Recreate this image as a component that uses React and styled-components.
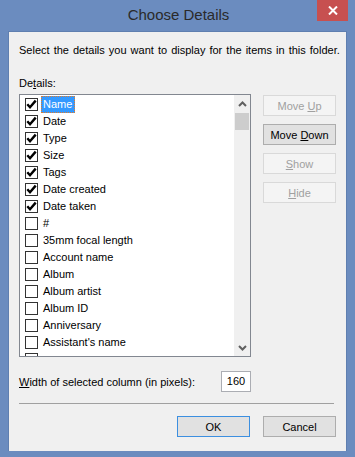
import styled, { createGlobalStyle } from "styled-components";

const GlobalStyle = createGlobalStyle`
  html, body {
    margin: 0;
    padding: 0;
    background: #6b8cbf;
  }
  body {
    font-family: "Liberation Sans", Arial, sans-serif;
    font-size: 11px;
    color: #000;
  }
`;

const details = [
  { name: "Name", checked: true, selected: true },
  { name: "Date", checked: true },
  { name: "Type", checked: true },
  { name: "Size", checked: true },
  { name: "Tags", checked: true },
  { name: "Date created", checked: true },
  { name: "Date taken", checked: true },
  { name: "#" },
  { name: "35mm focal length" },
  { name: "Account name" },
  { name: "Album" },
  { name: "Album artist" },
  { name: "Album ID" },
  { name: "Anniversary" },
  { name: "Assistant's name" },
  // only the top edge of this row's box shows above the list's bottom border
  { name: "" },
];

const Check = () => (
  <svg width="11" height="11" viewBox="0 0 11 11">
    <path
      d="M1.3 5.3 L4 8.3 L9.7 1.6"
      fill="none"
      stroke="#000"
      strokeWidth="2.4"
      strokeLinejoin="miter"
    />
  </svg>
);

const Chevron = ({ down }) => (
  <svg width="9" height="6" viewBox="0 0 9 6">
    <path
      d={down ? "M1 1 L4.5 4.5 L8 1" : "M1 5 L4.5 1.5 L8 5"}
      fill="none"
      stroke="#606060"
      strokeWidth="2"
    />
  </svg>
);

const App = () => {
  return (
    <>
      <GlobalStyle />
      <Window>
        <TitleBar>
          <span />
          <Title>Choose Details</Title>
          <CloseButton>
            <svg width="10" height="9" viewBox="0 0 10 9">
              <path d="M1 0.5 L9 8.5 M9 0.5 L1 8.5" stroke="#fff" strokeWidth="2" />
            </svg>
          </CloseButton>
        </TitleBar>
        <Client>
          <Intro>Select the details you want to display for the items in this folder.</Intro>
          <FieldLabel>
            De<u>t</u>ails:
          </FieldLabel>
          <MainRow>
            <ListBox>
              <Items>
                {details.map((d, i) => (
                  <Row key={i}>
                    <CheckBox>{d.checked && <Check />}</CheckBox>
                    {d.name && <ItemText $selected={d.selected}>{d.name}</ItemText>}
                  </Row>
                ))}
              </Items>
              <ScrollBar>
                <Arrow>
                  <Chevron />
                </Arrow>
                <Track>
                  <Thumb />
                </Track>
                <Arrow>
                  <Chevron down />
                </Arrow>
              </ScrollBar>
            </ListBox>
            <SideButtons>
              <Button disabled>
                Move <u>U</u>p
              </Button>
              <Button>
                Move <u>D</u>own
              </Button>
              <Button disabled>
                <u>S</u>how
              </Button>
              <Button disabled>
                <u>H</u>ide
              </Button>
            </SideButtons>
          </MainRow>
          <WidthRow>
            <span>
              <u>W</u>idth of selected column (in pixels):
            </span>
            <WidthInput>160</WidthInput>
          </WidthRow>
          <Separator />
          <Footer>
            <Button $default>OK</Button>
            <Button>Cancel</Button>
          </Footer>
        </Client>
      </Window>
    </>
  );
};

export default App;

const Window = styled.div`
  width: 355px;
  height: 457px;
  box-sizing: border-box;
  background: #6b8cbf;
  padding: 0 8px 6px 8px;
  display: flex;
  flex-direction: column;
`;

const TitleBar = styled.div`
  height: 31px;
  display: grid;
  grid-template-columns: 1fr auto 1fr;
  margin: 0 -1px 0 0;
`;

const Title = styled.div`
  font-size: 15px;
  color: #2a2a2a;
  line-height: 30px;
  padding-left: 1px;
`;

const CloseButton = styled.div`
  justify-self: end;
  width: 31px;
  height: 21px;
  background: #c75050;
  display: flex;
  align-items: center;
  justify-content: center;
`;

const Client = styled.div`
  flex: 1;
  background: #f0f0f0;
  border: 1px solid #5f7fb0;
  border-bottom: none;
  padding: 0 10px 0 10px;
  display: flex;
  flex-direction: column;
`;

const Intro = styled.div`
  margin-top: 12px;
  line-height: 13px;
  word-spacing: 1px;
  white-space: nowrap;
`;

const FieldLabel = styled.div`
  margin-top: 20px;
  line-height: 13px;
`;

const MainRow = styled.div`
  margin-top: 4px;
  display: flex;
  align-items: flex-start;
  gap: 12px;
`;

const ListBox = styled.div`
  width: 232px;
  height: 263px;
  box-sizing: border-box;
  border: 1px solid #828790;
  background: #fff;
  display: flex;
  overflow: hidden;
`;

const Items = styled.div`
  flex: 1;
  padding-top: 1px;
  overflow: hidden;
`;

const Row = styled.div`
  height: 17px;
  display: flex;
  align-items: center;
  padding-left: 5px;
`;

const CheckBox = styled.div`
  width: 13px;
  height: 13px;
  box-sizing: border-box;
  border: 1px solid #333;
  background: #fff;
  display: flex;
  align-items: center;
  justify-content: center;
  margin-right: 3px;
`;

const ItemText = styled.span`
  line-height: 15px;
  padding: 0 2px 0 1px;
  border: 1px dotted ${(p) => (p.$selected ? "#e07b2c" : "transparent")};
  background: ${(p) => (p.$selected ? "#3399ff" : "transparent")};
  color: ${(p) => (p.$selected ? "#fff" : "#000")};
`;

const ScrollBar = styled.div`
  width: 16px;
  background: #f0f0f0;
  display: flex;
  flex-direction: column;
`;

const Arrow = styled.div`
  height: 17px;
  display: flex;
  align-items: center;
  justify-content: center;
`;

const Track = styled.div`
  flex: 1;
  padding: 1px 1px 0 1px;
`;

const Thumb = styled.div`
  height: 17px;
  background: #cdcdcd;
`;

const SideButtons = styled.div`
  display: flex;
  flex-direction: column;
  gap: 8px;
  padding-top: 1px;
`;

const Button = styled.button`
  width: 73px;
  height: 21px;
  box-sizing: border-box;
  font-family: "Liberation Sans", Arial, sans-serif;
  font-size: 11px;
  padding: 0;
  background: ${(p) => (p.disabled ? "#f4f4f4" : "#e1e1e1")};
  border: 1px solid
    ${(p) => (p.disabled ? "#d9d9d9" : p.$default ? "#3c8fe0" : "#adadad")};
  color: ${(p) => (p.disabled ? "#a0a0a0" : "#000")};
`;

const WidthRow = styled.div`
  margin-top: 14px;
  display: flex;
  align-items: center;
  justify-content: space-between;
  width: 232px;
`;

const WidthInput = styled.div`
  width: 30px;
  height: 21px;
  box-sizing: border-box;
  border: 1px solid #abadb3;
  background: #fff;
  line-height: 19px;
  text-align: center;
`;

const Separator = styled.div`
  margin: 11px 2px 0 0;
  height: 1px;
  background: #a0a0a0;
`;

const Footer = styled.div`
  margin-top: 12px;
  display: flex;
  justify-content: flex-end;
  gap: 13px;
`;
